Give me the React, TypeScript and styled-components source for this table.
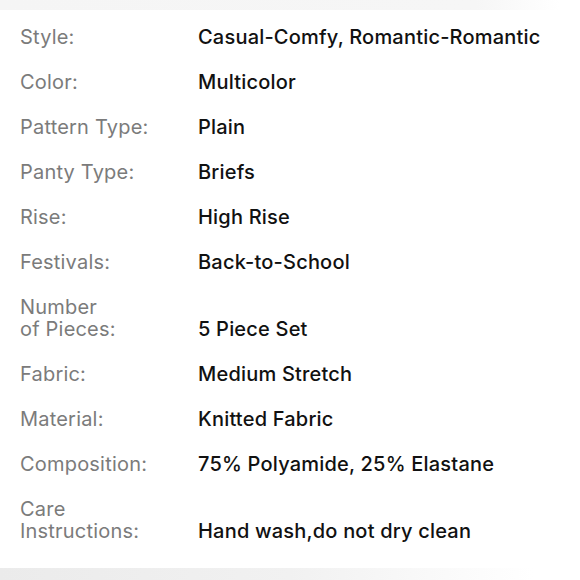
import styled, { createGlobalStyle } from "styled-components";

const GlobalStyle = createGlobalStyle`
  html, body {
    margin: 0;
    padding: 0;
    background: #ffffff;
    overflow: hidden;
  }
`;

type Spec = { label: string[]; value: string; copy?: boolean };

const specs: Spec[] = [
  { label: ["Style:"], value: "Casual-Comfy, Romantic-Romantic" },
  { label: ["Color:"], value: "Multicolor" },
  { label: ["Pattern Type:"], value: "Plain" },
  { label: ["Panty Type:"], value: "Briefs" },
  { label: ["Rise:"], value: "High Rise" },
  { label: ["Festivals:"], value: "Back-to-School" },
  { label: ["Number", "of Pieces:"], value: "5 Piece Set" },
  { label: ["Fabric:"], value: "Medium Stretch" },
  { label: ["Material:"], value: "Knitted Fabric" },
  { label: ["Composition:"], value: "75% Polyamide, 25% Elastane" },
  { label: ["Care", "Instructions:"], value: "Hand wash,do not dry clean" },
  { label: ["SKU:"], value: "sz2307160000000193", copy: true },
];

const App = () => {
  return (
    <>
      <GlobalStyle />
      <Screen>
        <TopFade />
        <SpecList>
          {specs.map((s) => (
            <SpecRow key={s.label.join(" ")}>
              <Label>
                {s.label.map((line) => (
                  <span key={line}>{line}</span>
                ))}
              </Label>
              <Value>
                {s.value}
                {s.copy && (
                  <CopyIcon viewBox="0 0 16 16">
                    <rect x="1.5" y="1.5" width="13" height="13" rx="1.5" fill="none" stroke="#2f6fbf" strokeWidth="1.6" />
                  </CopyIcon>
                )}
              </Value>
            </SpecRow>
          ))}
        </SpecList>
        <BottomFade />
      </Screen>
    </>
  );
};

const Screen = styled.div`
  position: relative;
  width: 580px;
  height: 580px;
  overflow: hidden;
  background: #ffffff;
  font-family: Inter, "Liberation Sans", Arial, sans-serif;
`;

const TopFade = styled.div`
  position: absolute;
  top: 0;
  left: 0;
  width: 560px;
  height: 10px;
  background: linear-gradient(90deg, #f5f5f5 0%, #f6f6f6 85%, #ffffff 100%);
  z-index: 2;
`;

const BottomFade = styled.div`
  position: absolute;
  bottom: 0;
  left: 0;
  width: 580px;
  height: 12px;
  background: linear-gradient(90deg, #ebebeb 0%, #f1f1f1 50%, #ffffff 92%);
  z-index: 2;
`;

const SpecList = styled.div`
  display: flex;
  flex-direction: column;
  padding: 3px 0 0 20px;
`;

const SpecRow = styled.div`
  display: grid;
  grid-template-columns: 178px 1fr;
  align-items: end;
  padding-top: 23px;
  font-size: 20px;
  line-height: 22px;
`;

const Label = styled.div`
  display: flex;
  flex-direction: column;
  color: #7b7b7b;
  font-weight: 400;
  letter-spacing: 0.2px;
`;

const Value = styled.div`
  display: flex;
  align-items: center;
  gap: 22px;
  color: #111111;
  font-weight: 500;
  letter-spacing: 0.2px;
`;

const CopyIcon = styled.svg`
  width: 15px;
  height: 15px;
  flex-shrink: 0;
`;

export default App;
